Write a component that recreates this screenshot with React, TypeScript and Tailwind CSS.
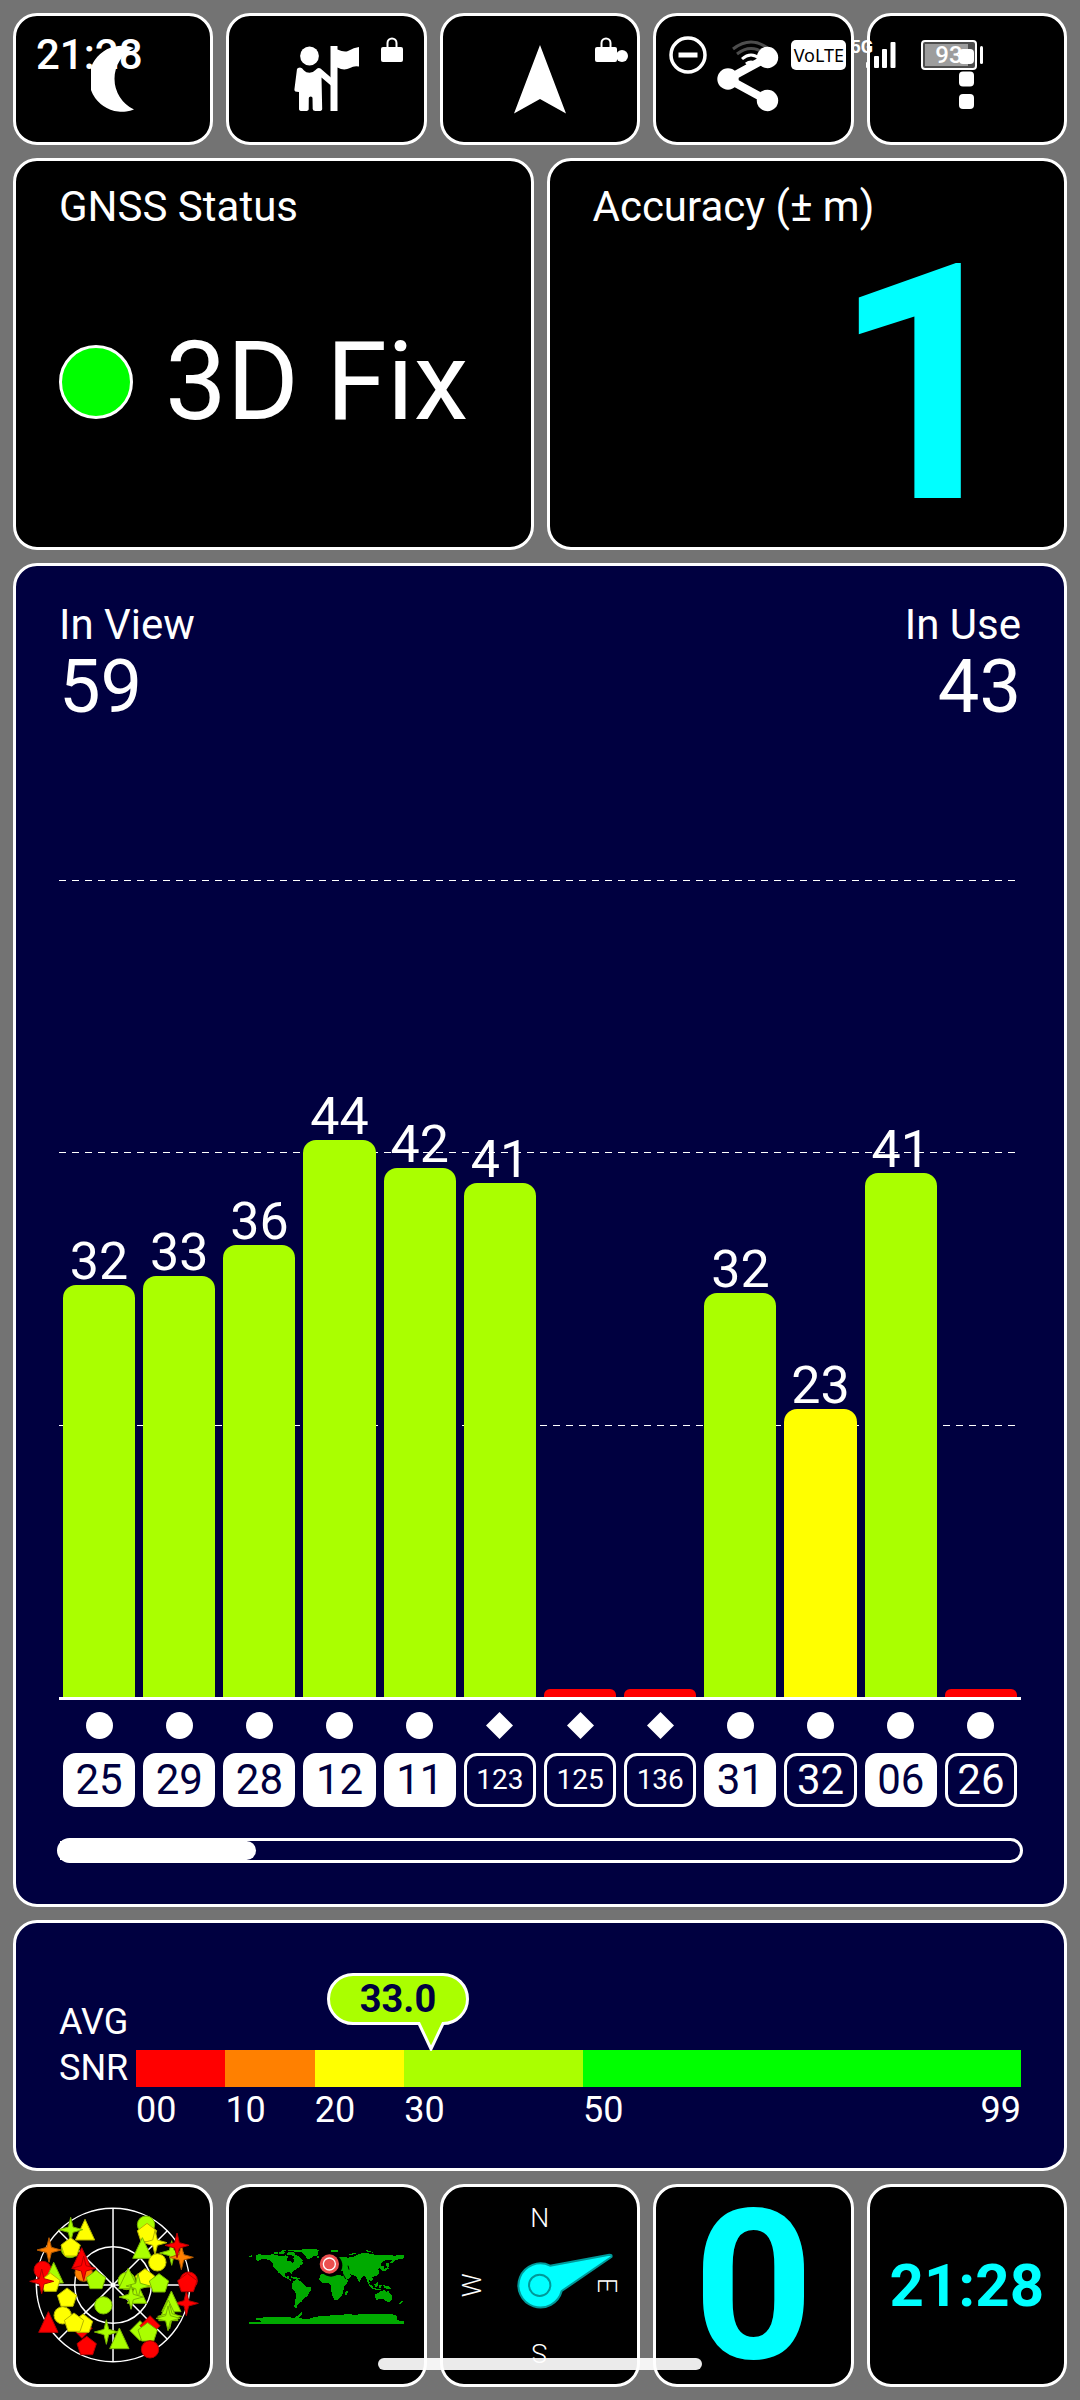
import type { ReactNode } from 'react';

type Shape = 'circle' | 'pentagon' | 'triangle' | 'star' | 'diamond';

interface Satellite {
  id: string;
  snr: number | null;
  // bar height as a percentage of the plot
  level: number;
  inUse: boolean;
  shape: 'circle' | 'diamond';
}

const satellites: Satellite[] = [
  { id: '25', snr: 32, level: 50.4, inUse: true, shape: 'circle' },
  { id: '29', snr: 33, level: 51.5, inUse: true, shape: 'circle' },
  { id: '28', snr: 36, level: 55.3, inUse: true, shape: 'circle' },
  { id: '12', snr: 44, level: 68.2, inUse: true, shape: 'circle' },
  { id: '11', snr: 42, level: 64.7, inUse: true, shape: 'circle' },
  { id: '123', snr: 41, level: 62.9, inUse: false, shape: 'diamond' },
  { id: '125', snr: null, level: 1, inUse: false, shape: 'diamond' },
  { id: '136', snr: null, level: 1, inUse: false, shape: 'diamond' },
  { id: '31', snr: 32, level: 49.4, inUse: true, shape: 'circle' },
  { id: '32', snr: 23, level: 35.2, inUse: false, shape: 'circle' },
  { id: '06', snr: 41, level: 64.2, inUse: true, shape: 'circle' },
  { id: '26', snr: null, level: 1, inUse: false, shape: 'circle' },
];

function barColor(snr: number | null) {
  if (snr === null) return 'bg-[#ff0000] rounded-t-[6px]';
  if (snr < 30) return 'bg-[#ffff00] rounded-t-[13px]';
  return 'bg-[#aaff00] rounded-t-[13px]';
}

const RED = '#ff0000';
const ORANGE = '#ff8000';
const YELLOW = '#ffff00';
const LIME = '#aaff00';

const strokes: Record<string, string> = {
  [RED]: '#b40000',
  [ORANGE]: '#b45a00',
  [YELLOW]: '#b4b400',
  [LIME]: '#78b400',
};

const skyMarks: [Shape, string, number, number][] = [
  ['star', LIME, 516, 250],
  ['circle', LIME, 439, 165],
  ['pentagon', YELLOW, 442, 189],
  ['star', YELLOW, 466, 219],
  ['triangle', LIME, 428, 238],
  ['circle', YELLOW, 473, 278],
  ['star', ORANGE, 545, 263],
  ['star', RED, 532, 227],
  ['circle', LIME, 381, 334],
  ['pentagon', YELLOW, 436, 325],
  ['triangle', LIME, 386, 329],
  ['triangle', LIME, 412, 373],
  ['star', LIME, 415, 349],
  ['star', LIME, 394, 382],
  ['pentagon', LIME, 478, 340],
  ['circle', RED, 567, 333],
  ['pentagon', RED, 563, 339],
  ['star', RED, 560, 401],
  ['triangle', LIME, 515, 398],
  ['triangle', LIME, 506, 425],
  ['star', LIME, 510, 440],
  ['star', LIME, 505, 446],
  ['triangle', YELLOW, 256, 183],
  ['star', LIME, 213, 180],
  ['circle', LIME, 211, 238],
  ['pentagon', YELLOW, 213, 232],
  ['star', ORANGE, 148, 241],
  ['circle', RED, 129, 301],
  ['triangle', LIME, 162, 312],
  ['pentagon', YELLOW, 152, 338],
  ['star', RED, 126, 335],
  ['circle', ORANGE, 252, 309],
  ['triangle', RED, 246, 268],
  ['star', RED, 252, 296],
  ['pentagon', LIME, 289, 330],
  ['pentagon', YELLOW, 202, 383],
  ['circle', LIME, 311, 407],
  ['circle', YELLOW, 189, 437],
  ['diamond', RED, 247, 476],
  ['pentagon', YELLOW, 250, 461],
  ['pentagon', YELLOW, 223, 458],
  ['triangle', RED, 146, 460],
  ['pentagon', RED, 261, 528],
  ['star', LIME, 320, 487],
  ['triangle', LIME, 359, 509],
  ['diamond', LIME, 421, 483],
  ['diamond', RED, 451, 468],
  ['pentagon', LIME, 444, 487],
  ['circle', RED, 451, 539],
];

function Tile({ label, children }: { label: string; children: ReactNode }) {
  return (
    <button
      type="button"
      aria-label={label}
      className="flex items-center justify-center overflow-hidden rounded-[24px] border-[3px] border-white bg-black"
    >
      {children}
    </button>
  );
}

function MoonIcon() {
  return (
    <svg width="44" height="68" viewBox="0 0 44 68" fill="#fff">
      <path d="M43 3A33 33 0 1 0 43 64.5A34 34 0 0 1 43 3Z" />
    </svg>
  );
}

function GuideIcon() {
  return (
    <svg width="66" height="66" viewBox="0 0 66 66" fill="#fff">
      <circle cx="15.5" cy="10" r="9.4" />
      <path d="M3 23Q3.5 21.5 6 21.5Q8 21.5 10 24.5Q12 26.8 15.5 26.8Q19 26.8 21.5 24Q24 21 26.5 22.5L37.5 32V40L27.5 31.5L28.2 63Q28 65 25 65H21.5Q18.8 65 18.7 63L18.5 52Q18.5 50.5 16.8 50.5Q14.8 50.5 14.8 52L14.7 63Q14.6 65 11.5 65H8Q5 65 5 63V46Q0 46 .4 43.5Z" />
      <path d="M36.5 0H43.5V3.5Q50 6.5 54 5Q60 1.5 65 1V20.5Q60 19.5 56 22Q50 25 43.5 21.5V65H36.5Z" />
    </svg>
  );
}

function ShareIcon() {
  return (
    <svg width="73" height="66" viewBox="0 0 73 66" fill="#fff">
      <path d="M50.5 11.5L11 33L50.5 54.5" fill="none" stroke="#fff" strokeWidth="8" />
      <circle cx="11" cy="33" r="10.7" />
      <circle cx="50.5" cy="11.5" r="10.7" />
      <circle cx="50.5" cy="54.5" r="10.7" />
    </svg>
  );
}

function LockIcon() {
  return (
    <svg width="22" height="25" viewBox="0 0 22 25">
      <path d="M6.5 12V6A4.5 4.5 0 0 1 15.5 6V12" fill="none" stroke="#fff" strokeWidth="2" />
      <rect y="10" width="22" height="15" rx="2" fill="#fff" />
    </svg>
  );
}

function StatusBar() {
  return (
    <div className="pointer-events-none absolute inset-x-0 top-0 flex h-[110px] items-center justify-between pl-[36px] pr-[97px] text-white">
      <div className="flex items-center">
        <span className="w-[345px] text-[42px] leading-[48px] font-medium">21:28</span>
        <div className="flex w-[214px] items-center pb-3">
          <LockIcon />
        </div>
        <div className="flex items-end pb-3">
          <LockIcon />
          <span className="-ml-px size-3 rounded-full bg-white" />
        </div>
      </div>
      <div className="flex items-center">
        <svg width="38" height="38" viewBox="0 0 38 38" fill="none" stroke="#fff">
          <circle cx="19" cy="19" r="17" strokeWidth="3.5" />
          <path d="M9.5 19H28.5" strokeWidth="5" />
        </svg>
        <svg className="ml-[24px]" width="40" height="30" viewBox="0 0 40 30" fill="none" stroke="#fff" strokeWidth="3">
          <path d="M2 9Q20-5 38 9" opacity=".3" />
          <path d="M6 14Q20 3 34 14" opacity=".3" />
          <path d="M11 19Q20 11 29 19" />
          <path d="M15 24Q20 20 25 24" />
        </svg>
        <span className="ml-[20px] flex h-[30px] w-[55px] items-center justify-center rounded-[5px] bg-white font-['Liberation_Sans_Narrow','Noto_Sans',sans-serif] text-[18px] leading-[24px] text-black">
          VoLTE
        </span>
        <span className="ml-[4px] pb-4 text-[18px] leading-[20px] font-bold">5G</span>
        <svg className="-ml-[7px]" width="30" height="26" viewBox="0 0 30 26" fill="#fff">
          <rect x="0" y="20" width="4" height="6" rx="1" />
          <rect x="8" y="14" width="5" height="12" rx="1" />
          <rect x="16" y="7" width="5" height="19" rx="1" />
          <rect x="24.5" y="0" width="5" height="26" rx="1" />
        </svg>
        <span className="ml-[25px] flex h-[30px] w-[56px] items-center justify-center rounded-[4px] border-2 border-white bg-white/30 p-[2px]">
          <span className="flex h-full w-full items-center justify-center bg-linear-to-r from-white/45 from-90% to-transparent to-90% text-[24px] leading-[24px] font-medium">
            93
          </span>
        </span>
        <span className="ml-[3px] h-[18px] w-[3px] rounded-sm bg-white" />
      </div>
    </div>
  );
}

function SnrChart() {
  return (
    <section className="flex flex-1 flex-col rounded-[24px] border-[3px] border-white bg-[#000040] px-[43px] pt-[35px] pb-[41px]">
      <div className="flex justify-between">
        <div>
          <p className="text-[42px] leading-[48px]">In View</p>
          <p className="mt-0.5 text-[74px] leading-[72px]">59</p>
        </div>
        <div className="text-right">
          <p className="text-[42px] leading-[48px]">In Use</p>
          <p className="mt-0.5 text-[74px] leading-[72px]">43</p>
        </div>
      </div>

      <div className="relative mt-[157px] flex min-h-[400px] flex-1 flex-col">
        <div className="absolute inset-0 flex flex-col pr-[6px]">
          {[0, 1, 2].map((line) => (
            <div key={line} className="flex-1">
              <div className="h-px bg-[repeating-linear-gradient(90deg,#fff_0_7px,transparent_7px_13px)]" />
            </div>
          ))}
        </div>
        <div className="relative grid flex-1 grid-cols-12">
          {satellites.map((sat) => (
            <div key={sat.id} className="flex flex-col justify-end px-1">
              {sat.snr !== null && (
                <span className="text-center text-[52px] leading-[46px]">{sat.snr}</span>
              )}
              <div className={barColor(sat.snr)} style={{ height: `${sat.level}%` }} />
            </div>
          ))}
        </div>
      </div>

      <div className="grid grid-cols-12 border-t-[3px] border-white pt-3">
        {satellites.map((sat) => (
          <div key={sat.id} className="flex flex-col items-center gap-[14px] px-1">
            <svg width="27" height="27" viewBox="0 0 27 27" fill="#fff">
              {sat.shape === 'circle' ? (
                <circle cx="13.5" cy="13.5" r="13.5" />
              ) : (
                <path d="M13.5 0L27 13.5L13.5 27L0 13.5Z" />
              )}
            </svg>
            <span
              className={`flex h-[54px] w-full items-center justify-center rounded-[13px] border-[3px] border-white ${
                sat.inUse ? 'bg-white text-[#000040]' : 'text-white'
              } ${sat.id.length > 2 ? 'text-[28px] leading-[32px]' : 'text-[42px] leading-[48px]'}`}
            >
              {sat.id}
            </span>
          </div>
        ))}
      </div>

      <div className="-mx-[2px] mt-[31px] h-[25px] rounded-full border-[3px] border-white">
        {/* 12 of 59 satellites are on screen */}
        <div className="h-full w-[20.4%] rounded-r-full bg-white" />
      </div>
    </section>
  );
}

const scale = [
  { from: '00', color: 'bg-[#ff0000]' },
  { from: '10', color: 'bg-[#ff8000]' },
  { from: '20', color: 'bg-[#ffff00]' },
  { from: '30', color: 'bg-[#aaff00]' },
  { from: '50', to: '99', color: 'bg-[#00ff00]' },
];

function AverageSnr({ value }: { value: number }) {
  return (
    <section className="flex rounded-[24px] border-[3px] border-white bg-[#000040] px-[43px] pt-[50px] pb-[38px]">
      <p className="w-[77px] pt-[26px] text-[36px] leading-[46px]">
        AVG
        <br />
        SNR
      </p>
      <div className="flex-1">
        <div className="relative h-[77px]">
          <div
            className="absolute top-0 -ml-[104px] h-[78px] w-[142px]"
            style={{ left: `${(value / 99) * 100}%` }}
          >
            <svg className="absolute inset-0" width="142" height="78" viewBox="0 0 142 78">
              <path
                d="M26 1.5H116A24.5 24.5 0 0 1 116 50.5L104 76L92 50.5H26A24.5 24.5 0 0 1 26 1.5Z"
                fill="#aaff00"
                stroke="#fff"
                strokeWidth="3"
              />
            </svg>
            <p className="relative text-center text-[38px] leading-[52px] font-bold text-[#000040]">
              {value.toFixed(1)}
            </p>
          </div>
        </div>
        <div className="grid grid-cols-[10fr_10fr_10fr_20fr_49fr]">
          {scale.map((step) => (
            <div key={step.from}>
              <div className={`h-[37px] ${step.color}`} />
              <p className="mt-[3px] flex justify-between text-[36px] leading-[40px]">
                <span>{step.from}</span>
                {step.to && <span>{step.to}</span>}
              </p>
            </div>
          ))}
        </div>
      </div>
    </section>
  );
}

function SkyMark({ shape, color, x, y }: { shape: Shape; color: string; x: number; y: number }) {
  const paths: Record<Exclude<Shape, 'circle'>, string> = {
    pentagon: 'M0-28L29-6L18 27H-18L-29-6Z',
    triangle: 'M0-34L29 28H-29Z',
    star: 'M0-37L7-8L36 0L7 8L0 37L-7 8L-36 0L-7-8Z',
    diamond: 'M0-30L30 0L0 30L-30 0Z',
  };
  return (
    <g transform={`translate(${x} ${y})`} fill={color} stroke={strokes[color]} strokeWidth="3">
      {shape === 'circle' ? <circle r="26" /> : <path d={paths[shape]} />}
    </g>
  );
}

function SkyView() {
  return (
    <svg className="h-[197px] w-full" viewBox="49 52 583 591">
      <g fill="none" stroke="#fff" strokeWidth="4.5">
        <circle cx="340" cy="346" r="230" />
        <circle cx="340" cy="346" r="115" />
        <path d="M340 116V576M110 346H570M177 183L503 509M503 183L177 509" />
      </g>
      {skyMarks.map(([shape, color, x, y]) => (
        <SkyMark key={`${x}-${y}`} shape={shape} color={color} x={x} y={y} />
      ))}
    </svg>
  );
}

function WorldMap() {
  return (
    <svg className="h-[197px] w-full" viewBox="28 52 583 591">
      <g fill="#00aa00" shapeRendering="crispEdges">
        <path d="M87 259L96 257L99 262L88 263ZM108 257L118 254L140 256L160 254L172 257L186 260L198 257L206 262L200 267L204 274L214 275L219 281L223 276L221 266L228 258L236 264L240 272L248 277L251 283L240 287L243 292L232 295L225 302L218 307L216 315L211 307L198 309L195 317L201 322L206 318L209 327L217 331L212 333L201 326L188 319L181 311L177 311L170 300L160 290L158 279L150 271L139 269L126 268L114 275L110 270Z" />
        <path d="M163 248L172 245L176 252L165 253ZM178 247L190 243L198 248L190 254L180 254ZM200 250L215 246L228 250L224 256L236 258L246 268L252 272L244 276L232 264L214 256L203 256ZM186 242L199 240L196 245ZM213 320L228 322L241 327L232 330L214 325Z" />
        <path d="M203 240L232 241L262 238L285 237L298 241L294 250L296 257L280 260L268 270L262 266L254 256L247 247L228 246L206 244ZM288 261L298 260L296 265Z" />
        <path d="M220 334L232 330L241 334L252 343L256 350L275 354L275 360L268 367L265 378L252 386L247 395L239 399L233 408L231 415L223 412L226 398L230 372L217 355L217 344Z" />
        <path d="M300 316L318 311L340 312L358 316L370 320L376 331L386 333L380 343L372 351L371 367L362 384L352 391L344 390L338 377L334 360L334 347L326 339L309 340L299 331ZM383 362L385 368L379 378L375 376L377 367Z" />
        <path d="M350 264L370 262L385 264L400 262L416 254L431 249L452 252L468 256L500 255L522 258L552 256V266L538 268L528 272L517 280L511 279L518 270L498 272L486 278L484 288L494 290L492 300L484 302L480 294L476 300L478 310L468 320L456 321L460 330L455 336L447 330L450 340L446 342L439 325L433 318L424 325L421 337L415 333L410 321L398 316L388 312L396 319L390 326L375 332L368 316L372 306L364 302L350 302Z" />
        <path d="M333 242H354V246H333ZM388 254L405 249L410 252L392 257ZM438 241L454 245L460 249L444 247ZM444 338L462 352L458 356L447 346ZM458 355L484 359L480 362L458 358ZM464 344L474 338L476 348L468 352ZM478 346L486 345L484 356L479 354ZM490 346L506 350L515 357L506 359L494 354ZM490 300L504 292L508 296L496 304L486 304ZM498 282L506 278L508 290L502 294Z" />
        <path d="M466 374L477 370L484 363L497 362L500 368L505 360L510 370L518 378L516 390L508 397L498 395L490 387L468 391ZM545 394L550 393L548 400L538 405L538 402Z" />
        <path d="M87 456H123L121 450L110 450L110 446L124 444L160 441L200 443L226 444L240 432L249 426L246 434L236 444L252 448L268 448L282 443L306 438L360 437L382 433L412 436L420 432H514L530 438L532 450L540 453H552V462H87Z" />
      </g>
      <path d="M368 310L378 328M385 288L388 300" stroke="#000" strokeWidth="3" fill="none" />
      <circle cx="334" cy="287" r="34" fill="#000" />
      <circle cx="329" cy="283" r="29" fill="#eb4f4f" />
      <circle cx="329" cy="283" r="18" fill="none" stroke="#fff" strokeWidth="4" />
    </svg>
  );
}

function Compass() {
  const points = [
    { label: 'N', angle: 0 },
    { label: 'E', angle: 90 },
    { label: 'S', angle: 180 },
    { label: 'W', angle: 270 },
  ];
  return (
    <svg className="h-[197px] w-full" viewBox="40 52 583 591">
      {points.map(({ label, angle }) => (
        <text
          key={label}
          x="330"
          y="171"
          fill="#fff"
          fontSize="80"
          fontWeight="300"
          textAnchor="middle"
          transform={`rotate(${angle} 330 347)`}
        >
          {label}
        </text>
      ))}
      <g fill="#00ffff" stroke="#009999" strokeWidth="6" strokeLinejoin="round">
        <path d="M361 288L539 255Q548 255 545 262L396 364A66 66 0 1 1 361 288Z" />
        <circle cx="330" cy="347" r="32" />
      </g>
    </svg>
  );
}

export default function App() {
  return (
    <main className="relative flex min-h-screen flex-col gap-[13px] bg-[#737373] p-[13px] font-['Roboto',sans-serif] text-white">
      <div className="grid h-[132px] grid-cols-5 gap-[13px]">
        <Tile label="Night mode">
          <MoonIcon />
        </Tile>
        <Tile label="Guide">
          <GuideIcon />
        </Tile>
        <Tile label="Navigate">
          <svg width="52" height="69" viewBox="0 0 52 69" fill="#fff">
            <path d="M26 0L52 68.5L26 54L0 68.5Z" />
          </svg>
        </Tile>
        <Tile label="Share">
          <ShareIcon />
        </Tile>
        <Tile label="More options">
          <svg width="15" height="60" viewBox="0 0 15 60" fill="#fff">
            <rect width="15" height="15" rx="4" />
            <rect y="22.5" width="15" height="15" rx="4" />
            <rect y="45" width="15" height="15" rx="4" />
          </svg>
        </Tile>
      </div>

      <div className="grid min-h-[392px] grid-cols-2 gap-[13px]">
        <section className="rounded-[24px] border-[3px] border-white bg-black px-[43px] pt-[22px]">
          <h2 className="text-[42px] leading-[48px]">GNSS Status</h2>
          <div className="mt-[95px] flex items-center gap-[32px]">
            <span className="size-[74px] rounded-full border-[3px] border-white bg-[#00ff00]" />
            <span className="text-[110px] leading-[112px]">3D Fix</span>
          </div>
        </section>
        <section className="rounded-[24px] border-[3px] border-white bg-black px-[43px] pt-[22px]">
          <h2 className="text-[42px] leading-[48px]">Accuracy (± m)</h2>
          <p className="mt-[35px] text-right text-[330px] leading-[240px] font-bold text-[#00ffff]">1</p>
        </section>
      </div>

      <SnrChart />
      <AverageSnr value={33} />

      <div className="grid h-[203px] grid-cols-5 gap-[13px]">
        <Tile label="Sky view">
          <SkyView />
        </Tile>
        <Tile label="World map">
          <WorldMap />
        </Tile>
        <Tile label="Compass">
          <Compass />
        </Tile>
        <Tile label="Speed">
          <span className="text-[210px] leading-[190px] font-bold text-[#00ffff]">0</span>
        </Tile>
        <Tile label="Clock">
          <span className="text-[60px] leading-[64px] font-bold text-[#00ffff]">21:28</span>
        </Tile>
      </div>

      <StatusBar />
      <div className="absolute bottom-[30px] left-1/2 h-3 w-[30%] -translate-x-1/2 rounded-full bg-white/92" />
    </main>
  );
}
